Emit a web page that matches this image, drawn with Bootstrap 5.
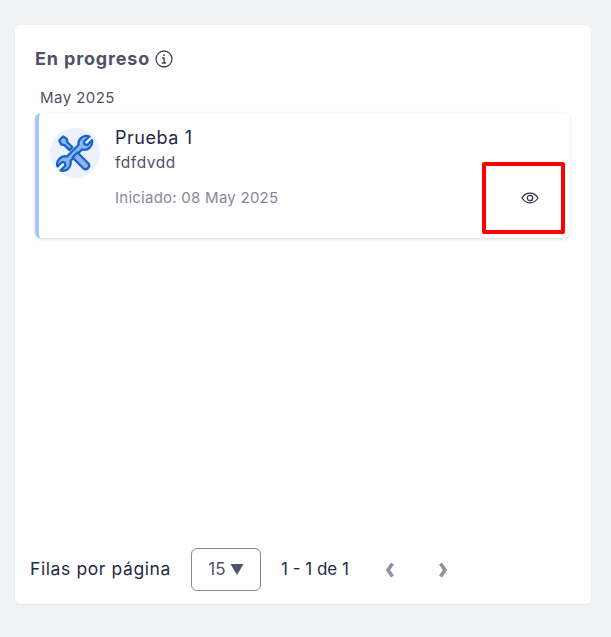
<!doctype html>
<html lang="es"><head><meta charset="utf-8"><title>En progreso</title>
<link href="https://cdn.jsdelivr.net/npm/bootstrap@5.3.0/dist/css/bootstrap.min.css" rel="stylesheet">
<style>
html,body{height:100%}
body{background:#f1f2f4;font-family:Inter,"Liberation Sans",sans-serif;color:#1f2a44;padding:25px 20px 33px 15px;overflow:hidden}
.panel{height:579px;background:#fff;border-radius:5px;box-shadow:0 1px 2px rgba(40,50,80,.08);padding:20px 21px 0 20px;display:flex;flex-direction:column}
.head-title{font-size:18px;font-weight:700;letter-spacing:.85px;color:#4f5268;line-height:28px;margin:0;height:28px;gap:5px}
.month{font-size:15px;letter-spacing:.45px;color:#4f5268;line-height:20px;margin:15px 0 5px 5px;height:20px}
.task{position:relative;height:125px;border-radius:6px;border-left:4px solid #a9c5fa;box-shadow:0 1px 3px rgba(60,70,100,.22);padding:15px 11px 0 11px;display:flex;gap:15px}
.avatar{width:50px;height:50px;border-radius:50%;background:#ebf1fe;display:flex;align-items:center;justify-content:center;flex:none}
.t-name{font-size:18px;letter-spacing:.55px;line-height:22px;color:#1f2a44;margin-top:-1px}
.t-sub{font-size:15.5px;letter-spacing:.55px;line-height:20px;color:#4f5268;margin-top:4px}
.t-date{font-size:15px;letter-spacing:.25px;line-height:20px;color:#85889c;margin-top:15px}
.eye{position:absolute;right:31px;bottom:31px;width:18px;height:18px;display:block}
.mark-box{position:absolute;left:443px;top:49px;width:83px;height:72px;border:4px solid #f00;border-radius:2px}
.pager{margin-top:auto;height:69px;margin-left:-5px;display:flex;align-items:center;font-size:17px;color:#1f2a44}
.rows-label{font-size:17.500px;letter-spacing:.6px}
.size-box{width:70px;height:43px;border:1px solid #85889c;border-radius:6px;margin-left:20px;margin-right:20px;display:flex;align-items:center;justify-content:center;gap:4px;color:#4f5268}
.chev{display:block}
.chev-prev{margin-left:36px}
.chev-next{margin-left:43px}
</style></head><body>
<main class="panel">
  <h2 class="head-title d-flex align-items-center">En progreso
    <svg width="18" height="18" viewBox="0 0 18 18" fill="none" stroke="#3f4258" stroke-width="1.3"><circle cx="9" cy="9" r="8"/><path d="M7.500 8h1.600v5M7.300 13h3.400" stroke-linecap="round" stroke-linejoin="round"/><circle cx="8.900" cy="5.200" r=".9" fill="#3f4258" stroke="none"/></svg>
  </h2>
  <div class="month">May 2025</div>
  <article class="task">
    <div class="avatar">
      <svg width="38" height="38" viewBox="0 0 38 38" stroke="#1565c8" stroke-width="2.300" stroke-linejoin="round" stroke-linecap="round" fill="#8fb4f2">
        <path d="M33.500 2.500L28 7.500l.6 2.800 2.800.7L36 6a8 8 0 0 1-10 9.500L14.500 27a8 8 0 0 1-10 9.500l5-5-.6-2.800-2.800-.7-4.600 4.500a8 8 0 0 1 9.500-10L22.500 11a8 8 0 0 1 11-8.500z"/>
        <path d="M21.500 18.500l11 11a3.600 3.600 0 0 1-5 5l-11-11z"/>
        <path d="M7 2.500l3.800 2.500.6 3.200 5 5-2.900 2.900-5-5-3.200-.6L3.200 6.500z"/>
      </svg>
    </div>
    <div>
      <div class="t-name">Prueba 1</div>
      <div class="t-sub">fdfdvdd</div>
      <div class="t-date">Iniciado: 08 May 2025</div>
    </div>
    <svg class="eye" viewBox="0 0 18 18" fill="none" stroke="#2b3048" stroke-width="1.2"><path d="M1 9c2-3.200 4.800-4.800 8-4.800S15 5.800 17 9c-2 3.200-4.800 4.800-8 4.800S3 12.200 1 9z"/><circle cx="9" cy="9" r="2.700"/></svg>
    <div class="mark-box"></div>
  </article>
  <footer class="pager">
    <span class="rows-label">Filas por página</span>
    <div class="size-box"><span>15</span><svg width="14" height="11" viewBox="0 0 14 11"><path d="M.5 0h13L7 11z" fill="#4f5268"/></svg></div>
    <span>1 - 1 de 1</span>
    <svg class="chev chev-prev" width="10" height="16" viewBox="0 0 10 16" fill="none" stroke="#8f92a3" stroke-width="3.600"><path d="M7.500 1.500L3 8l4.500 6.500"/></svg>
    <svg class="chev chev-next" width="10" height="16" viewBox="0 0 10 16" fill="none" stroke="#8f92a3" stroke-width="3.600"><path d="M2.500 1.500L7 8l-4.500 6.500"/></svg>
  </footer>
</main>
<script src="https://cdn.jsdelivr.net/npm/bootstrap@5.3.0/dist/js/bootstrap.bundle.min.js"></script>
</body></html>
